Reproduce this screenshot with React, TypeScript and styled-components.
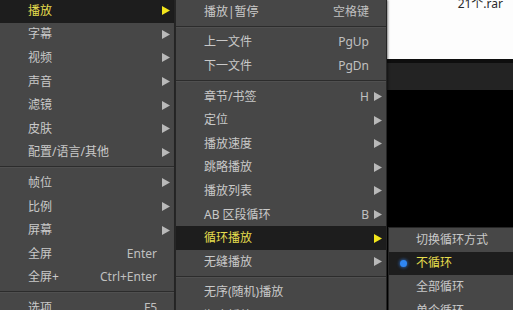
import React from 'react';
import styled, { createGlobalStyle } from 'styled-components';

type Item =
	| { kind: 'sep' }
	| { kind: 'item'; label: string; shortcut?: string; sub?: boolean; active?: boolean; checked?: boolean };

const item = (label: string, shortcut?: string, sub = false, active = false): Item => ({ kind: 'item', label, shortcut, sub, active });
const sep: Item = { kind: 'sep' };

const mainMenu: Item[] = [
	item('播放', undefined, true, true),
	item('字幕', undefined, true),
	item('视频', undefined, true),
	item('声音', undefined, true),
	item('滤镜', undefined, true),
	item('皮肤', undefined, true),
	item('配置/语言/其他', undefined, true),
	sep,
	item('帧位', undefined, true),
	item('比例', undefined, true),
	item('屏幕', undefined, true),
	item('全屏', 'Enter'),
	item('全屏+', 'Ctrl+Enter'),
	sep,
	item('选项', 'F5'),
];

const playMenu: Item[] = [
	item('播放|暂停', '空格键'),
	sep,
	item('上一文件', 'PgUp'),
	item('下一文件', 'PgDn'),
	sep,
	item('章节/书签', 'H', true),
	item('定位', undefined, true),
	item('播放速度', undefined, true),
	item('跳略播放', undefined, true),
	item('播放列表', undefined, true),
	item('AB 区段循环', 'B', true),
	item('循环播放', undefined, true, true),
	item('无缝播放', undefined, true),
	sep,
	item('无序(随机)播放'),
	item('顺序播放'),
];

const loopMenu: Item[] = [
	item('切换循环方式'),
	{ kind: 'item', label: '不循环', active: true, checked: true },
	item('全部循环'),
	item('单个循环'),
];

const GlobalStyle = createGlobalStyle`
	html, body {
		margin: 0;
		padding: 0;
		background: #000;
		overflow: hidden;
	}
`;

const Screen = styled.div`
	position: relative;
	width: 513px;
	height: 310px;
	overflow: hidden;
	display: flex;
	flex-direction: column;
	background: #000;
	font-family: "Noto Sans", "Noto Sans CJK SC", sans-serif;
	font-size: 12px;
`;

const FileArea = styled.div`
	height: 59px;
	background: #fdfdfd;
	display: flex;
	justify-content: flex-end;
	align-items: flex-start;
	padding-right: 10px;
	color: #2a2a2a;
	font-size: 12px;
	line-height: 12px;
`;

const FileName = styled.span`
	margin-top: -2px;
`;

const Shade = styled.div`
	height: 4px;
	background: #0e0e0e;
`;

const ControlBar = styled.div`
	height: 27px;
	background: #232323;
`;

const Video = styled.div`
	flex: 1;
	background: #000;
`;

const Menu = styled.div<{ $left: number; $top: number; $width: number }>`
	position: absolute;
	left: ${p => p.$left}px;
	top: ${p => p.$top}px;
	width: ${p => p.$width}px;
	background: #474747;
	border: 1px solid #262626;
	box-sizing: border-box;
	box-shadow: 1px 1px 2px rgba(0, 0, 0, 0.5);
`;

const Row = styled.div<{ $active?: boolean; $indent: number }>`
	display: grid;
	grid-template-columns: ${p => p.$indent}px 1fr auto 17px;
	align-items: center;
	height: 23.6px;
	background: ${p => p.$active ? '#1d1d1d' : 'transparent'};
	color: ${p => p.$active ? '#e6de4e' : '#c9c9c9'};
	white-space: nowrap;
`;

const Mark = styled.span`
	display: flex;
	justify-content: center;
	padding-left: 2px;
`;

const Dot = styled.span`
	width: 7px;
	height: 7px;
	border-radius: 50%;
	background: #2f86f2;
	box-shadow: 0 0 3px 1px rgba(50, 130, 240, 0.55);
	margin-left: -1px;
`;

const Label = styled.span`
	line-height: 14px;
`;

const Shortcut = styled.span`
	line-height: 14px;
	color: #c0c0c0;
`;

const ArrowCell = styled.span`
	display: flex;
	align-items: center;
	padding-left: 5px;
`;

const Separator = styled.div`
	height: 7px;
	box-sizing: border-box;
	padding-top: 2px;

	&::after {
		content: '';
		display: block;
		height: 1px;
		background: #2c2c2c;
		border-bottom: 1px solid #505050;
	}
`;

const Arrow: React.FC<{ active?: boolean }> = ({ active }) => (
	<svg width="8" height="9" viewBox="0 0 8 9">
		<polygon points="0,0 8,4.5 0,9" fill={active ? '#f2e51c' : '#b9b9b9'} />
	</svg>
);

const MenuList: React.FC<{ items: Item[]; indent: number }> = ({ items, indent }) => (
	<>
		{items.map((it, i) => {
			if (it.kind === 'sep')
				return <Separator key={i} />;

			return (
				<Row key={i} $active={it.active} $indent={indent}>
					<Mark>{it.checked && <Dot />}</Mark>
					<Label>{it.label}</Label>
					<Shortcut>{it.shortcut}</Shortcut>
					<ArrowCell>{it.sub && <Arrow active={it.active} />}</ArrowCell>
				</Row>
			);
		})}
	</>
);

const App: React.FC = () => (
	<>
		<GlobalStyle />
		<Screen>
			<FileArea>
				<FileName>{'21个.rar'}</FileName>
			</FileArea>
			<Shade />
			<ControlBar />
			<Video />

			<Menu $left={-1} $top={-2} $width={176}>
				<MenuList items={mainMenu} indent={28} />
			</Menu>
			<Menu $left={175} $top={-1} $width={212}>
				<MenuList items={playMenu} indent={28} />
			</Menu>
			<Menu $left={388} $top={227} $width={150}>
				<MenuList items={loopMenu} indent={27} />
			</Menu>
		</Screen>
	</>
);

export default App;
